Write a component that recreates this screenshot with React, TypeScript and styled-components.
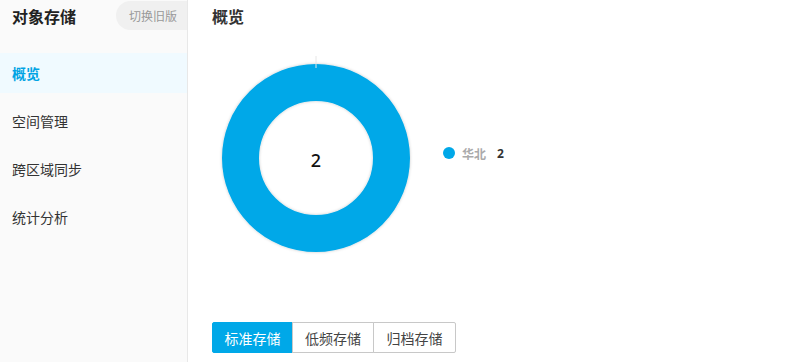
import React, { useState } from "react";
import styled, { createGlobalStyle } from "styled-components";

const GlobalStyle = createGlobalStyle`
  html, body {
    margin: 0;
    padding: 0;
    background: #fff;
  }
  body {
    font-family: "Noto Sans CJK SC", "Noto Sans", sans-serif;
    color: #333;
  }
`;

const menu = ["概览", "空间管理", "跨区域同步", "统计分析"];
const tabs = ["标准存储", "低频存储", "归档存储"];

export default function App() {
  const [active, setActive] = useState(0);
  const [tab, setTab] = useState(0);

  return (
    <>
      <GlobalStyle />
      <Page>
        <Sidebar>
          <SideHead>
            <SideTitle>对象存储</SideTitle>
            <SwitchButton>切换旧版</SwitchButton>
          </SideHead>
          <Menu>
            {menu.map((item, i) => (
              <MenuItem key={item} $active={i === active} onClick={() => setActive(i)}>
                {item}
              </MenuItem>
            ))}
          </Menu>
        </Sidebar>
        <Main>
          <PageTitle>概览</PageTitle>
          <ChartRow>
            <Donut>
              <svg width="200" height="200" viewBox="0 0 200 200">
                <defs>
                  <filter id="ringShadow" x="-20%" y="-20%" width="140%" height="140%">
                    <feDropShadow dx="0" dy="0" stdDeviation="1.6" floodColor="#000" floodOpacity="0.22" />
                  </filter>
                </defs>
                <circle
                  cx="100"
                  cy="100"
                  r="75.5"
                  fill="none"
                  stroke="#00a8e8"
                  strokeWidth="37"
                  filter="url(#ringShadow)"
                />
                <line x1="100" y1="-2" x2="100" y2="10" stroke="#e6e6e6" strokeWidth="1" />
              </svg>
              <DonutValue>2</DonutValue>
            </Donut>
            <Legend>
              <Dot />
              <LegendName>华北</LegendName>
              <LegendValue>2</LegendValue>
            </Legend>
          </ChartRow>
          <Tabs>
            {tabs.map((t, i) => (
              <Tab key={t} $active={i === tab} onClick={() => setTab(i)}>
                {t}
              </Tab>
            ))}
          </Tabs>
        </Main>
      </Page>
    </>
  );
}

const Page = styled.div`
  display: flex;
  width: 798px;
  height: 362px;
  overflow: hidden;
`;

const Sidebar = styled.aside`
  width: 187px;
  flex-shrink: 0;
  background: #fafafa;
  border-right: 1px solid #e8e8e8;
  overflow: hidden;
`;

const SideHead = styled.div`
  display: flex;
  align-items: center;
  justify-content: space-between;
  height: 33px;
  padding-left: 12px;
`;

const SideTitle = styled.div`
  font-size: 16px;
  font-weight: 700;
  color: #222;
  line-height: 1;
  margin-top: -2px;
`;

const SwitchButton = styled.div`
  display: flex;
  align-items: center;
  height: 29px;
  padding: 0 10px 0 13px;
  margin-top: -2px;
  border-radius: 15px 0 0 15px;
  background: #f0f0f0;
  color: #999;
  font-size: 12px;
  cursor: pointer;
`;

const Menu = styled.nav`
  display: flex;
  flex-direction: column;
  margin-top: 20px;
`;

const MenuItem = styled.div<{ $active?: boolean }>`
  display: flex;
  align-items: center;
  height: 40px;
  margin-bottom: 8px;
  padding-left: 12px;
  font-size: 14px;
  cursor: pointer;
  color: ${(p) => (p.$active ? "#00a4e4" : "#333")};
  font-weight: ${(p) => (p.$active ? 700 : 400)};
  background: ${(p) => (p.$active ? "#f0faff" : "transparent")};
`;

const Main = styled.main`
  flex: 1;
  display: flex;
  flex-direction: column;
  padding: 5px 0 0 24px;
`;

const PageTitle = styled.h2`
  margin: 0;
  font-size: 16px;
  font-weight: 700;
  color: #333;
  line-height: 22px;
`;

const ChartRow = styled.div`
  display: flex;
  align-items: center;
  margin-top: 31px;
`;

const Donut = styled.div`
  position: relative;
  width: 200px;
  height: 200px;
  margin-left: 4px;
  svg {
    display: block;
    overflow: visible;
  }
`;

const DonutValue = styled.div`
  position: absolute;
  inset: 0;
  display: flex;
  align-items: center;
  justify-content: center;
  font-size: 18px;
  font-weight: 500;
  color: #111;
  font-family: "Noto Sans", sans-serif;
  padding-top: 4px;
`;

const Legend = styled.div`
  display: flex;
  align-items: center;
  margin: -10px 0 0 27px;
  font-size: 12px;
  font-weight: 700;
`;

const Dot = styled.span`
  width: 12px;
  height: 12px;
  border-radius: 50%;
  background: #00a8e8;
  margin-right: 7px;
`;

const LegendName = styled.span`
  color: #aaa;
  margin-right: 11px;
`;

const LegendValue = styled.span`
  color: #333;
  font-family: "Noto Sans", sans-serif;
`;

const Tabs = styled.div`
  display: flex;
  margin-top: 64px;
`;

const Tab = styled.div<{ $active?: boolean }>`
  display: flex;
  align-items: center;
  justify-content: center;
  width: 82px;
  height: 31px;
  box-sizing: border-box;
  font-size: 14px;
  cursor: pointer;
  border: 1px solid ${(p) => (p.$active ? "#00a8e8" : "#c8c8c8")};
  background: ${(p) => (p.$active ? "#00a8e8" : "#fff")};
  color: ${(p) => (p.$active ? "#fff" : "#444")};
  & + & {
    margin-left: -1px;
  }
  &:first-child {
    width: 81px;
    border-radius: 2px 0 0 2px;
  }
  &:last-child {
    width: 83px;
    border-radius: 0 2px 2px 0;
  }
`;
